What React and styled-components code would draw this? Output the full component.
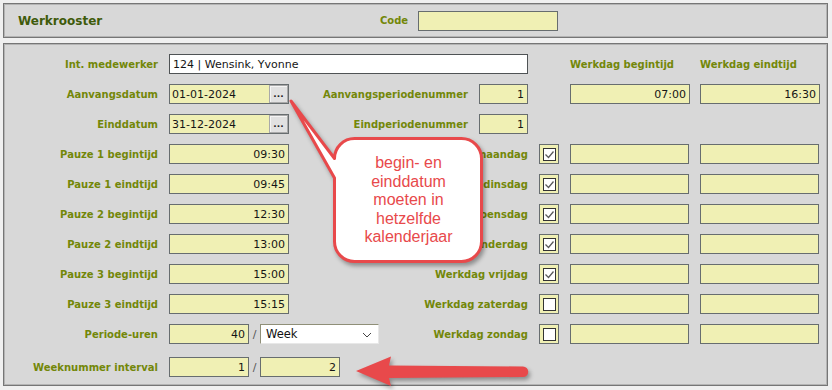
import React from 'react';
import styled, { createGlobalStyle } from 'styled-components';

const GlobalStyle = createGlobalStyle`
  html, body {
    margin: 0;
    padding: 0;
    background: #f0f0f0;
  }
`;

const LABEL = '#738709';
const TITLE = '#3f5b0b';
const FIELD_BG = '#f0f0b4';
const FIELD_BORDER = '#676d6f';
const RED = '#e8494b';

const weekdays = [
    { pauze: 'Pauze 1 begintijd', time: '09:30', day: 'Werkdag maandag', on: true },
    { pauze: 'Pauze 1 eindtijd', time: '09:45', day: 'Werkdag dinsdag', on: true },
    { pauze: 'Pauze 2 begintijd', time: '12:30', day: 'Werkdag woensdag', on: true },
    { pauze: 'Pauze 2 eindtijd', time: '13:00', day: 'Werkdag donderdag', on: true },
    { pauze: 'Pauze 3 begintijd', time: '15:00', day: 'Werkdag vrijdag', on: true },
    { pauze: 'Pauze 3 eindtijd', time: '15:15', day: 'Werkdag zaterdag', on: false },
];

function Check({ on }) {
    return (
        <CheckCell>
            <CheckBox>
                {on && (
                    <svg width="11" height="11" viewBox="0 0 11 11">
                        <polyline points="1.5,5.5 4.5,8.5 9.5,2.5" fill="none" stroke="#5a5a5a" strokeWidth="1.3" />
                    </svg>
                )}
            </CheckBox>
        </CheckCell>
    );
}

function DateField({ value }) {
    return (
        <DateBox>
            <span>{value}</span>
            <DateButton>...</DateButton>
        </DateBox>
    );
}

export default function App() {
    return (
        <Page>
            <GlobalStyle />
            <Header>
                <Title>Werkrooster</Title>
                <Label>Code</Label>
                <Field $w={140} readOnly defaultValue="" />
            </Header>

            <Body>
                <Label>Int. medewerker</Label>
                <Field $w={359} $white $span={2} readOnly defaultValue="124 | Wensink, Yvonne" />
                <Empty />
                <ColHead>Werkdag begintijd</ColHead>
                <ColHead>Werkdag eindtijd</ColHead>

                <Label>Aanvangsdatum</Label>
                <Split>
                    <DateField value="01-01-2024" />
                    <Label>Aanvangsperiodenummer</Label>
                </Split>
                <Field $w={49} $align="right" readOnly defaultValue="1" />
                <Empty />
                <Field $align="right" readOnly defaultValue="07:00" />
                <Field $align="right" readOnly defaultValue="16:30" />

                <Label>Einddatum</Label>
                <Split>
                    <DateField value="31-12-2024" />
                    <Label>Eindperiodenummer</Label>
                </Split>
                <Field $w={49} $align="right" readOnly defaultValue="1" />

                {weekdays.map(w => (
                    <React.Fragment key={w.day}>
                        <Label>{w.pauze}</Label>
                        <Split $span={2}>
                            <Field $align="right" readOnly defaultValue={w.time} />
                            <Label>{w.day}</Label>
                        </Split>
                        <Check on={w.on} />
                        <Field $w={119} readOnly defaultValue="" />
                        <Field $w={119} readOnly defaultValue="" />
                    </React.Fragment>
                ))}

                <Label>Periode-uren</Label>
                <Split $span={2}>
                    <Pair>
                        <Field $w={80} $align="right" readOnly defaultValue="40" />
                        <Slash>/</Slash>
                        <SelectBox>
                            <span>Week</span>
                            <svg width="10" height="6" viewBox="0 0 10 6">
                                <polyline points="1,1 5,5 9,1" fill="none" stroke="#444" strokeWidth="1" />
                            </svg>
                        </SelectBox>
                    </Pair>
                    <Label>Werkdag zondag</Label>
                </Split>
                <Check on={false} />
                <Field $w={119} readOnly defaultValue="" />
                <Field $w={119} readOnly defaultValue="" />

                <Label>Weeknummer interval</Label>
                <Pair>
                    <Field $w={80} $align="right" readOnly defaultValue="1" />
                    <Slash>/</Slash>
                    <Field $w={80} $align="right" readOnly defaultValue="2" />
                </Pair>
            </Body>

            <CalloutShape viewBox="280 90 215 185" width="215" height="185">
                <path
                    d="M354.5 138.5 H461.5 A20 20 0 0 1 481.5 158.5 V241.5 A20 20 0 0 1 461.5 261.5 H354.5 A20 20 0 0 1 334.5 241.5 V178 L291 101 L334.5 158.5 A20 20 0 0 1 354.5 138.5 Z"
                    fill="#fff"
                    stroke={RED}
                    strokeWidth="3"
                    strokeLinejoin="round"
                />
            </CalloutShape>
            <CalloutText>
                begin- en<br />einddatum<br />moeten in<br />hetzelfde<br />kalenderjaar
            </CalloutText>

            <ArrowShape viewBox="350 350 185 40" width="185" height="40">
                <path
                    d="M356 371 L391 356.5 L389 365.5 L523 366.5 A5.25 5.25 0 0 1 523 377 L389 378 L391 386 Z"
                    fill={RED}
                />
            </ArrowShape>
        </Page>
    );
}

const Page = styled.div`
    position: relative;
    width: 832px;
    height: 390px;
    box-sizing: border-box;
    padding: 3px 4px 0 3px;
    font-family: "DejaVu Sans", Verdana, sans-serif;
    overflow: hidden;
`;

const Panel = styled.div`
    background: #d8d8d8;
    border: 1px solid #767676;
    box-shadow: inset 0 0 0 1px #b4b4b4;
    box-sizing: border-box;
`;

const Header = styled(Panel)`
    height: 35px;
    display: flex;
    align-items: center;
    padding-left: 14px;
    & > label {
        margin-right: 10px;
    }
`;

const Title = styled.div`
    width: 362px;
    font-size: 12px;
    font-weight: bold;
    color: ${TITLE};
`;

const Body = styled(Panel)`
    margin-top: 5px;
    height: 343px;
    padding: 10px 0 0 1px;
    display: grid;
    grid-template-columns: 153px 299px 49px 20px 119px 119px;
    grid-template-rows: repeat(10, 20px) 23px;
    column-gap: 11px;
    row-gap: 10px;
    align-items: end;
`;

const Label = styled.label`
    display: flex;
    align-items: center;
    justify-content: flex-end;
    height: 20px;
    font-size: 10px;
    font-weight: bold;
    color: ${LABEL};
    white-space: nowrap;
    ${Body} > & {
        grid-column: 1;
    }
`;

const ColHead = styled.div`
    display: flex;
    align-items: center;
    height: 20px;
    font-size: 10px;
    font-weight: bold;
    color: ${LABEL};
    white-space: nowrap;
`;

const Empty = styled.div``;

const Split = styled.div`
    grid-column: span ${p => p.$span || 1};
    display: flex;
    justify-content: space-between;
    align-items: center;
    height: 20px;
`;

const Field = styled.input`
    grid-column: span ${p => p.$span || 1};
    box-sizing: border-box;
    width: ${p => p.$w || 120}px;
    height: 20px;
    margin: 0;
    padding: 0 3px;
    border: 1px solid ${p => (p.$white ? '#4f5355' : FIELD_BORDER)};
    border-radius: 0;
    background: ${p => (p.$white ? '#fff' : FIELD_BG)};
    font-family: "DejaVu Sans", Verdana, sans-serif;
    font-size: 11px;
    color: #151515;
    text-align: ${p => p.$align || 'left'};
    outline: none;
`;

const DateBox = styled.div`
    box-sizing: border-box;
    width: 120px;
    height: 20px;
    display: flex;
    align-items: center;
    justify-content: space-between;
    padding-left: 2px;
    border: 1px solid ${FIELD_BORDER};
    background: ${FIELD_BG};
    font-size: 11px;
    color: #151515;
`;

const DateButton = styled.div`
    box-sizing: border-box;
    width: 19px;
    height: 18px;
    display: flex;
    align-items: flex-end;
    justify-content: center;
    padding-bottom: 3px;
    background: #e1e1e1;
    border: 1px solid #a9a9a9;
    box-shadow: inset 1px 1px 0 #f4f4f4;
    font-size: 9px;
    font-weight: bold;
    line-height: 1;
    color: #222;
`;

const CheckCell = styled.div`
    box-sizing: border-box;
    width: 20px;
    height: 20px;
    display: flex;
    align-items: center;
    justify-content: center;
    border: 1px solid ${FIELD_BORDER};
    background: ${FIELD_BG};
`;

const CheckBox = styled.div`
    box-sizing: border-box;
    width: 13px;
    height: 13px;
    display: flex;
    align-items: center;
    justify-content: center;
    border: 1px solid #333;
    background: #fff;
`;

const Pair = styled.div`
    display: flex;
    align-items: center;
    height: 20px;
`;

const Slash = styled.span`
    width: 11px;
    text-align: center;
    font-size: 11px;
    color: #555;
`;

const SelectBox = styled.div`
    box-sizing: border-box;
    width: 119px;
    height: 20px;
    display: flex;
    align-items: center;
    justify-content: space-between;
    padding: 0 6px 0 5px;
    background: #fff;
    border-style: solid;
    border-width: 1px 1px 1px 1px;
    border-color: #8f8f78 #e8e8e8 #e8e8e8 #8f8f78;
    font-size: 11.5px;
    color: #111;
    svg {
        margin-top: 2px;
    }
`;

const CalloutShape = styled.svg`
    position: absolute;
    left: 280px;
    top: 90px;
    overflow: visible;
    filter: drop-shadow(2px 3px 2px rgba(0, 0, 0, 0.35));
`;

const CalloutText = styled.div`
    position: absolute;
    left: 336px;
    top: 154px;
    width: 145px;
    text-align: center;
    font-family: "Liberation Sans", Arial, sans-serif;
    font-size: 16px;
    line-height: 18.5px;
    color: ${RED};
`;

const ArrowShape = styled.svg`
    position: absolute;
    left: 350px;
    top: 350px;
    overflow: visible;
    filter: drop-shadow(2px 3px 2px rgba(0, 0, 0, 0.35));
`;
